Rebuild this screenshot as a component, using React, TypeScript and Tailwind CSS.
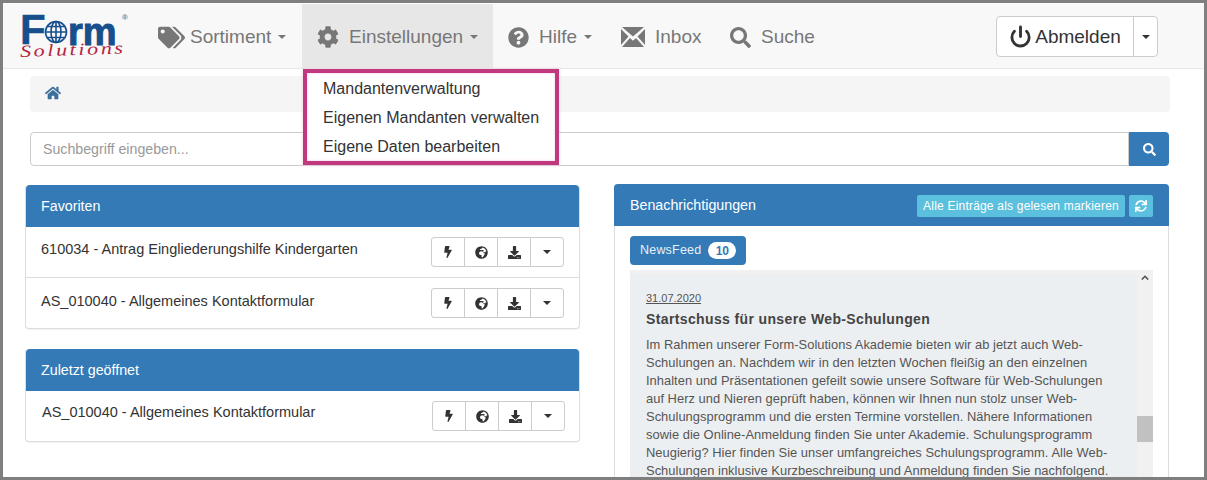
import { FaBolt, FaCog, FaDownload, FaGlobeAfrica, FaHome, FaQuestionCircle, FaSearch, FaSync, FaTags } from "react-icons/fa";
import { Power } from "lucide-react";
import type { ReactNode } from "react";

const newsLines = [
  "Im Rahmen unserer Form-Solutions Akademie bieten wir ab jetzt auch Web-",
  "Schulungen an. Nachdem wir in den letzten Wochen fleißig an den einzelnen",
  "Inhalten und Präsentationen gefeilt sowie unsere Software für Web-Schulungen",
  "auf Herz und Nieren geprüft haben, können wir Ihnen nun stolz unser Web-",
  "Schulungsprogramm und die ersten Termine vorstellen. Nähere Informationen",
  "sowie die Online-Anmeldung finden Sie unter Akademie. Schulungsprogramm",
  "Neugierig? Hier finden Sie unser umfangreiches Schulungsprogramm. Alle Web-",
  "Schulungen inklusive Kurzbeschreibung und Anmeldung finden Sie nachfolgend.",
];

function Caret({ className = "" }: { className?: string }) {
  return <span className={`inline-block h-0 w-0 border-x-[4px] border-t-[4px] border-x-transparent border-t-current ${className}`} />;
}

function InboxIcon() {
  return (
    <svg viewBox="0 0 24 20" className="h-[20px] w-[24px]" fill="currentColor">
      <path d="M1 0h22L12 9.5z" />
      <path d="M0 2v16l7.5-8.5z" />
      <path d="M24 2v16l-7.5-8.5z" />
      <path d="M1 20h22l-8-9-3 2.8L9 11z" />
    </svg>
  );
}

function NavItem({ icon, label, caret, active, className = "" }: { icon: ReactNode; label: string; caret?: boolean; active?: boolean; className?: string }) {
  return (
    <div className={`flex h-full items-center gap-[10px] pt-[2px] text-[#777] ${active ? "bg-[#e7e7e7] text-[#5e5e5e]" : ""} ${className}`}>
      {icon}
      <span>{label}</span>
      {caret && <Caret className="ml-[-3px]" />}
    </div>
  );
}

function ActionGroup() {
  const cell = "flex w-[33px] items-center justify-center border-r border-[#ccc] last:border-r-0";
  return (
    <div className="flex h-[30px] w-[133px] rounded-[3px] border border-[#ccc] bg-white text-[#333]">
      <div className={cell}><FaBolt size={12} /></div>
      <div className={cell}><FaGlobeAfrica size={13} /></div>
      <div className={cell}><FaDownload size={13} /></div>
      <div className={`${cell} flex-1`}><Caret /></div>
    </div>
  );
}

function FormRow({ title, last, h, textTop, indent = "pl-[15px]", right = "pr-[15px]" }: { title: string; last?: boolean; h: string; textTop: string; indent?: string; right?: string }) {
  return (
    <div className={`flex items-start justify-between pt-[10px] ${indent} ${right} ${h} ${last ? "" : "border-b border-[#ddd]"}`}>
      <span className={`text-[14.5px] leading-[20px] text-[#333] ${textTop}`}>{title}</span>
      <ActionGroup />
    </div>
  );
}

function PanelHeader({ children }: { children: ReactNode }) {
  return <div className="flex h-[42px] items-center rounded-t-[4px] bg-[#337ab7] px-[15px] pt-[2px] text-[14.25px] text-white">{children}</div>;
}

export default function App() {
  return (
    <div className="relative h-[480px] w-[1207px] overflow-hidden border-[3px] border-[#7f7f7f] bg-white font-['Liberation_Sans',Arial,sans-serif]">
      <nav className="flex h-[66px] items-stretch border-b border-t border-b-[#e7e7e7] border-t-white bg-[#f8f8f8] text-[19px]">
        <div className="relative ml-[17px] mt-[12px] flex w-[118px] flex-col leading-none">
          <div className="flex h-[30px] items-end font-bold text-[#174f8c]">
            <span className="w-[24px] text-[42px] leading-[32px] [-webkit-text-stroke:0.5px_#174f8c]">F</span>
            <svg viewBox="0 0 24 24" className="mb-[2px] h-[24px] w-[24px]" fill="none" stroke="#174f8c" strokeWidth="1.6">
              <circle cx="12" cy="12" r="10.5" />
              <ellipse cx="12" cy="12" rx="5" ry="10.5" />
              <path d="M12 1.5v21M1.5 12h21M3 6.5h18M3 17.5h18" />
            </svg>
            <span className="mb-[-1px] text-[38px] leading-[30px] [-webkit-text-stroke:1px_#174f8c]">rm</span>
            <span className="absolute left-[102px] top-[-2px] text-[8px] text-[#777]">®</span>
          </div>
          <span className="mt-[-1px] origin-left -rotate-2 scale-x-[1.3] font-['Liberation_Serif',serif] text-[17px] italic leading-[14px] tracking-[2px] text-[#b5243f]">Solutions</span>
        </div>
        <NavItem className="ml-[20px] w-[144px]" icon={<FaTags size={27} className="mr-[-5px]" />} label="Sortiment" caret />
        <NavItem active className="w-[191px] pl-[15px]" icon={<FaCog size={22} />} label="Einstellungen" caret />
        <NavItem className="w-[128px] pl-[15px]" icon={<FaQuestionCircle size={21} />} label="Hilfe" caret />
        <NavItem className="w-[109px]" icon={<InboxIcon />} label="Inbox" />
        <NavItem icon={<FaSearch size={21} />} label="Suche" />
        <div className="ml-auto mr-[46px] mt-[12px] flex h-[41px] rounded-[4px] border border-[#ccc] bg-white text-[#333]">
          <div className="flex w-[137px] items-center justify-center gap-[3px] border-r border-[#ccc] pt-[1px]">
            <Power size={23} strokeWidth={3} className="mb-[2px]" />
            <span>Abmelden</span>
          </div>
          <div className="flex w-[23px] items-center justify-center"><Caret /></div>
        </div>
      </nav>

      <div className="absolute left-[300px] top-[66px] z-10 h-[96px] w-[256px] border-[4px] border-[#c0397f] bg-white pl-[16px] pt-[1px] text-[16px] leading-[29px] text-[#333] shadow-[0_0_3px_#f3c6e0,inset_0_0_3px_#f3c6e0]">
        <div>Mandantenverwaltung</div>
        <div>Eigenen Mandanten verwalten</div>
        <div>Eigene Daten bearbeiten</div>
      </div>

      <div className="ml-[27px] mt-[7px] flex h-[36px] w-[1140px] items-center rounded-[4px] bg-[#f5f5f5] pb-[2px] pl-[15px] text-[#3b6f9e]">
        <FaHome size={16} />
      </div>

      <div className="ml-[27px] mt-[20px] flex h-[34px] w-[1139px]">
        <div className="flex flex-1 items-center rounded-l-[4px] border border-[#ccc] pl-[12px] pt-[2px] text-[14.2px] text-[#999]">Suchbegriff eingeben...</div>
        <div className="flex w-[40px] items-center justify-center rounded-r-[4px] bg-[#337ab7] text-white"><FaSearch size={13} /></div>
      </div>

      <div className="ml-[22px] mt-[19px] flex items-start gap-[34px]">
        <div className="flex w-[555px] flex-col gap-[20px]">
          <div className="rounded-[4px] border-x border-b border-[#ddd] shadow-[0_1px_1px_rgba(0,0,0,0.05)]">
            <PanelHeader>Favoriten</PanelHeader>
            <FormRow title="610034 - Antrag Eingliederungshilfe Kindergarten" h="h-[51px]" textTop="mt-[2px]" />
            <FormRow title="AS_010040 - Allgemeines Kontaktformular" h="h-[50px]" textTop="mt-[3px]" last />
          </div>
          <div className="rounded-[4px] border-x border-b border-[#ddd] shadow-[0_1px_1px_rgba(0,0,0,0.05)]">
            <PanelHeader>Zuletzt geöffnet</PanelHeader>
            <FormRow title="AS_010040 - Allgemeines Kontaktformular" h="h-[50px]" textTop="mt-[1px]" indent="pl-[16px]" right="pr-[14px]" last />
          </div>
        </div>

        <div className="-mt-px h-[300px] w-[555px] rounded-t-[4px] border-x border-[#ddd]">
          <div className="-mx-px flex h-[42px] items-center justify-between rounded-t-[4px] bg-[#337ab7] pl-[16px] pr-[16px] pt-[1px] text-[14.25px] text-white">
            <span>Benachrichtigungen</span>
            <div className="flex gap-[4px] text-[12px]">
              <span className="flex h-[22px] w-[208px] items-center justify-center rounded-[2px] bg-[#5bc0de] tracking-[0.2px]">Alle Einträge als gelesen markieren</span>
              <span className="flex h-[22px] w-[24px] items-center justify-center rounded-[2px] bg-[#5bc0de]"><FaSync size={12} /></span>
            </div>
          </div>
          <div className="px-[15px] pt-[10px]">
            <div className="flex h-[29px] w-[116px] items-center gap-[7px] rounded-[4px] bg-[#337ab7] pl-[10px] text-[12.5px] text-[#e8f1f8]">
              <span className="tracking-[0.2px]">NewsFeed</span>
              <span className="flex h-[17px] w-[28px] items-center justify-center rounded-full bg-white text-[12px] font-bold text-[#337ab7]">10</span>
            </div>
            <div className="mt-[5px] flex h-[210px] w-[523px]">
              <div className="w-[507px] border-t-[4px] border-[#f1f1f1] bg-[#eceff1] pl-[16px] pt-[17px] text-[#555]">
                <div className="text-[11px] leading-[14px] underline">31.07.2020</div>
                <div className="mt-[4px] text-[14px] font-bold leading-[20px] tracking-[0.37px] text-[#444]">Startschuss für unsere Web-Schulungen</div>
                <div className="mt-[7px] whitespace-nowrap text-[12.9px] leading-[18px] tracking-[0.03px]">
                  {newsLines.map((line) => <div key={line}>{line}</div>)}
                </div>
              </div>
              <div className="flex w-[16px] flex-col items-center bg-[#f1f1f1]">
                <svg viewBox="0 0 10 6" className="mt-[5px] h-[5px] w-[8px]" fill="none" stroke="#505050" strokeWidth="2"><path d="M1 5.5 5 1.5l4 4" /></svg>
                <div className="mt-[136px] h-[26px] w-full bg-[#c1c1c1]" />
              </div>
            </div>
          </div>
        </div>
      </div>
    </div>
  );
}
